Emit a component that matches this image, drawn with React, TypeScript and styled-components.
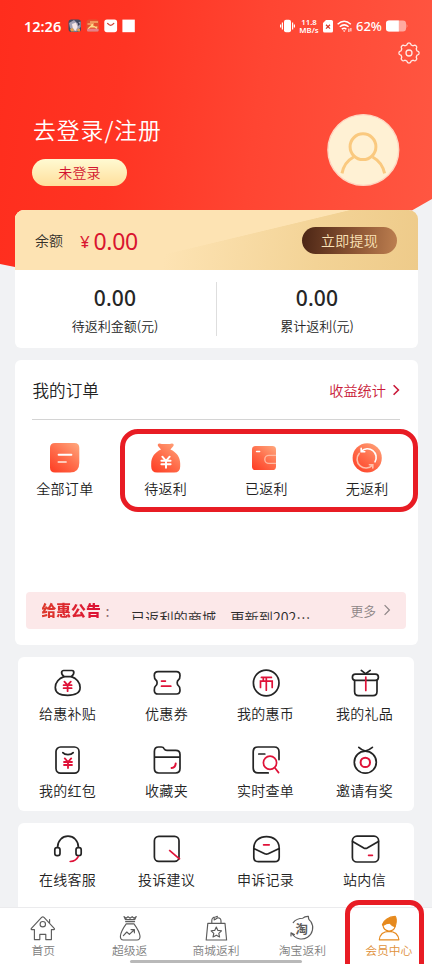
import React from "react";
import styled, { createGlobalStyle } from "styled-components";

const Global = createGlobalStyle`
  * { box-sizing: border-box; }
  html, body { margin: 0; padding: 0; background: #f1f2f4; }
  body { font-family: "Noto Sans CJK SC", sans-serif; font-weight: 350; color: #222; }
  svg { display: block; flex: none; overflow: visible; }
`;

const Screen = styled.div`
  position: relative;
  width: 432px;
  height: 964px;
  display: flex;
  flex-direction: column;
  overflow: hidden;
  background: #f1f2f4;
`;
const Scroll = styled.main`
  flex: 1;
  min-height: 0;
  overflow: hidden;
`;

/* ---------- header ---------- */
const Hero = styled.header`
  height: 276px;
  background: linear-gradient(97deg, #ff2d1d 0%, #ff3423 28%, #ff4532 58%, #ff5742 100%);
  clip-path: polygon(0 0, 432px 0, 432px 199px, 411px 211px, 300px 276px, 60px 276px, 0 264px);
`;
const StatusBar = styled.div`
  height: 41px;
  padding: 11px 24px 0 24px;
  display: flex;
  justify-content: space-between;
  color: #fff;
  font-family: "Noto Sans", sans-serif;
`;
const StatusGroup = styled.div<{ $gap: number }>`
  display: flex;
  align-items: center;
  height: 30px;
  gap: ${(p) => p.$gap}px;
`;
const Clock = styled.span`
  font-size: 14.5px;
  font-weight: 600;
  line-height: 30px;
  width: 38px;
  white-space: nowrap;
`;
const Speed = styled.span`
  display: flex;
  flex-direction: column;
  align-items: center;
  width: 20px;
`;
const SpeedLine = styled.span`
  height: 8px;
  font-size: 7.8px;
  line-height: 8px;
  font-weight: 600;
  white-space: nowrap;
`;
const Percent = styled.span`
  font-size: 13px;
  font-weight: 500;
  line-height: 30px;
  width: 26px;
  white-space: nowrap;
`;
const SettingsRow = styled.div`
  display: flex;
  justify-content: flex-end;
  padding-right: 11px;
  height: 73px;
`;
const Profile = styled.div`
  display: flex;
  justify-content: space-between;
  padding: 0 32px;
`;
const ProfileText = styled.div`
  display: flex;
  flex-direction: column;
  align-items: flex-start;
`;
const LoginTitle = styled.h1`
  margin: 0;
  height: 45px;
  padding-left: 1px;
  font-size: 22.8px;
  line-height: 32px;
  letter-spacing: 1px;
  font-weight: 350;
  color: #fff;
`;
const LoginPill = styled.button`
  width: 95px;
  height: 27px;
  padding: 0;
  border: 0;
  border-radius: 14px;
  background: linear-gradient(#fffad2, #ffdf9c);
  color: #d2142e;
  font: 350 14px/27px "Noto Sans CJK SC", sans-serif;
  letter-spacing: 0.2px;
`;

/* ---------- cards ---------- */
const Content = styled.div`
  position: relative;
  z-index: 1;
  margin-top: -66px;
  display: flex;
  flex-direction: column;
  align-items: center;
  gap: 12px;
`;
const Card = styled.section<{ $w: number; $h: number }>`
  width: ${(p) => p.$w}px;
  height: ${(p) => p.$h}px;
  flex: none;
  border-radius: 6px;
  background: #fff;
`;
const BalanceCard = styled(Card)`
  border-radius: 9px 9px 6px 6px;
  overflow: hidden;
`;
const Gold = styled.div`
  height: 60px;
  padding: 0 20.5px 0 20.5px;
  display: flex;
  align-items: center;
  background:
    linear-gradient(166.5deg, #fde3b3 51.1%, rgba(253, 227, 179, 0) 51.6%),
    linear-gradient(100deg, #fde3b3 38%, #f3d396 75%, #eecb8a 100%);
`;
const BalanceLabel = styled.span`
  font-size: 14px;
  width: 45px;
  color: #33302a;
`;
const Yen = styled.span`
  font: 400 17px/24px "Noto Sans", sans-serif;
  width: 13.5px;
  padding-top: 4px;
  color: #d9152f;
`;
const BalanceAmount = styled.span`
  flex: 1;
  padding-top: 2px;
  font: 400 23px/30px "Noto Sans", sans-serif;
  letter-spacing: -0.3px;
  color: #d9152f;
`;
const Withdraw = styled.button`
  width: 95px;
  height: 27px;
  padding: 0;
  border: 0;
  border-radius: 14px;
  background: linear-gradient(95deg, #4b2515, #8b5433 55%, #bd7f50);
  color: #fbe3b8;
  font: 350 14px/27px "Noto Sans CJK SC", sans-serif;
  letter-spacing: 0.2px;
`;
const Totals = styled.div`
  display: flex;
  align-items: center;
  height: 78px;
`;
const Total = styled.div`
  flex: 1;
  display: flex;
  flex-direction: column;
  align-items: center;
`;
const TotalValue = styled.strong`
  font: 500 21px/30px "Noto Sans", sans-serif;
  letter-spacing: 0.2px;
  color: #262626;
`;
const TotalName = styled.span`
  font-size: 13px;
  line-height: 20px;
  margin-top: 3px;
  white-space: nowrap;
`;
const Rule = styled.i`
  width: 1px;
  height: 54px;
  background: #dedede;
`;

const OrdersHead = styled.div`
  height: 60px;
  margin: 0 17.5px;
  display: flex;
  align-items: center;
  justify-content: space-between;
  border-bottom: 1px solid #d4d4d4;
`;
const OrdersTitle = styled.h2`
  margin: 0;
  padding-left: 0.5px;
  font-size: 16.6px;
  font-weight: 350;
  line-height: 24px;
`;
const StatsLink = styled.a`
  display: flex;
  align-items: center;
  gap: 6px;
  font-size: 14.2px;
  color: #c91938;
`;
const OrdersGrid = styled.div`
  height: 172px;
  padding-top: 23px;
  display: grid;
  grid-template-columns: repeat(4, 1fr);
  align-content: start;
`;
const Cell = styled.a<{ $gap: number }>`
  display: flex;
  flex-direction: column;
  align-items: center;
  gap: ${(p) => p.$gap}px;
`;
const CellName = styled.span`
  font-size: 14px;
  line-height: 20px;
  letter-spacing: 0.3px;
  white-space: nowrap;
`;
const Notice = styled.div`
  height: 36.5px;
  margin: 0 11.5px;
  padding: 0 15px 0 15.5px;
  display: flex;
  align-items: center;
  border-radius: 4px;
  background: #fce8e9;
`;
const NoticeBrand = styled.b`
  width: 60px;
  font-size: 14.8px;
  font-weight: 900;
  line-height: 24px;
  white-space: nowrap;
  background: linear-gradient(90deg, #dd3a2c, #dc0f35);
  background-clip: text;
  -webkit-background-clip: text;
  color: transparent;
`;
const Colon = styled.span`
  width: 29.5px;
  padding-left: 4px;
  font-size: 15px;
  color: #8b6a6c;
`;
const NoticeClip = styled.div`
  flex: 1;
  height: 11px;
  margin-top: 8px;
  overflow: hidden;
  font-size: 14.2px;
  line-height: 16px;
  white-space: nowrap;
  color: #2b2b2b;
`;
const More = styled.a`
  display: flex;
  align-items: center;
  gap: 7px;
  font-size: 12.8px;
  color: #8d8586;
`;
const ServiceGrid = styled.div<{ $top: number }>`
  padding-top: ${(p) => p.$top}px;
  display: grid;
  grid-template-columns: repeat(4, 99px);
  grid-auto-rows: 77px;
`;

/* ---------- bottom navigation ---------- */
const Nav = styled.nav`
  position: relative;
  height: 57px;
  flex: none;
  display: grid;
  grid-template-columns: repeat(5, 1fr);
  padding-top: 7px;
  background: #fff;
  border-top: 1px solid #ebebed;
`;
const Tab = styled.a<{ $active?: boolean }>`
  display: flex;
  flex-direction: column;
  align-items: center;
  color: ${(p) => (p.$active ? "#e68a1e" : "#5c5c5c")};
`;
const TabName = styled.span<{ $active?: boolean }>`
  font-size: 11.8px;
  line-height: 13px;
  white-space: nowrap;
  color: ${(p) => (p.$active ? "#e0913a" : "#808080")};
`;
const HomeIndicator = styled.i`
  position: absolute;
  left: 130px;
  bottom: 1px;
  width: 172px;
  height: 3px;
  border-radius: 2px;
  background: #b9b9b9;
`;
const Marker = styled.div<{ $x: number; $y: number; $w: number; $h: number; $r: number }>`
  position: absolute;
  z-index: 5;
  left: ${(p) => p.$x}px;
  top: ${(p) => p.$y}px;
  width: ${(p) => p.$w}px;
  height: ${(p) => p.$h}px;
  border: 5px solid #e81c24;
  border-radius: ${(p) => p.$r}px;
  pointer-events: none;
`;

/* ---------- icons ---------- */
const RED = "#df1238";

const YenMark = ({ x, y, s = 1, color = RED, w = 1.8 }: { x: number; y: number; s?: number; color?: string; w?: number }) => (
  <path
    transform={`translate(${x} ${y}) scale(${s})`}
    d="M-3.2 -4.6 L0 -1 L3.2 -4.6 M-4 -1 H4 M-4 2 H4 M0 -1 V5"
    stroke={color}
    strokeWidth={w}
    fill="none"
  />
);

const Line = ({ children, width = 1.7 }: { children: React.ReactNode; width?: number }) => (
  <svg width="28" height="28" viewBox="0 0 28 28" fill="none" stroke="#242424" strokeWidth={width} strokeLinecap="round" strokeLinejoin="round">
    {children}
  </svg>
);

const serviceIcons: Record<string, React.ReactNode> = {
  subsidy: (
    <Line>
      <path d="M10 7.6C8.2 6 7.2 4 7.8 2.5Q8.2 1.5 9.5 1.5H17.8Q19.2 1.5 19.7 2.5C20.2 4 19.2 6 17.4 7.6Z" />
      <path d="M10 7.6C5 9.4 1.3 13.6 1.3 18.4C1.3 23.8 6 26.3 13.7 26.3S26.1 23.8 26.1 18.4C26.1 13.6 22.4 9.4 17.4 7.6" />
      <YenMark x={13.6} y={17.2} />
    </Line>
  ),
  coupon: (
    <Line>
      <path d="M5 2.7H23.4C25.8 2.7 27 4 27 6.5C27 9.5 26.8 9.9 25.6 10.7C23.7 12 23.7 15.6 25.6 16.9C26.8 17.7 27 18.2 27 21.2C27 23.7 25.8 25 23.4 25H5C2.6 25 1.3 23.7 1.3 21.2C1.3 18.2 1.5 17.7 2.7 16.9C4.6 15.6 4.6 12 2.7 10.7C1.5 9.9 1.3 9.5 1.3 6.5C1.3 4 2.6 2.7 5 2.7Z" />
      <path d="M8.5 12.1H12.4M8.5 17.2H17.8" stroke={RED} />
    </Line>
  ),
  coin: (
    <Line>
      <circle cx="14.2" cy="14" r="12.8" />
      <path d="M9.4 8.4H19.4M14.3 8.6V21.2M8.5 18.4V12.1H20.2V18.4M11.3 8.6V12" stroke={RED} strokeLinejoin="miter" />
    </Line>
  ),
  gift: (
    <Line>
      <rect x="1.4" y="5.2" width="26" height="6.2" rx="3.1" />
      <path d="M3.6 11.6V22.6Q3.6 26.7 7.6 26.7H22Q26 26.7 26 22.6V11.6M10.3 1.4L14.7 4.8L19.2 1.4" />
      <path d="M14.8 8V21.4" stroke={RED} />
    </Line>
  ),
  packet: (
    <Line>
      <rect x="2" y="1" width="23" height="26.2" rx="4.6" />
      <path d="M8.8 6.6C11 9.2 17 9.2 19.2 6.6" />
      <YenMark x={14} y={17} />
    </Line>
  ),
  folder: (
    <Line>
      <path d="M1.4 22.6V5.4Q1.4 1 5.6 1H8.2Q10.4 1 11.2 2.8Q12 4.4 14 4.4H22.8Q27 4.4 27 8.6V22.6Q27 27 22.6 27H5.8Q1.4 27 1.4 22.6ZM1.4 11.1H27" />
      <path d="M22.7 17.6Q22.3 21.6 18.6 22" stroke={RED} strokeWidth="2" />
    </Line>
  ),
  search: (
    <Line>
      <path d="M27 13.6V5.8Q27 1 22.2 1H6Q1.2 1 1.2 5.8V22Q1.2 26.9 6 26.9H16.2M6.8 8H12.8" />
      <circle cx="18" cy="16.8" r="6.6" stroke={RED} />
      <path d="M22.8 21.8L26.6 26.6" stroke={RED} />
    </Line>
  ),
  invite: (
    <Line>
      <circle cx="14.3" cy="16.2" r="11" />
      <path d="M7.8 1.3Q11 4.2 14.3 5Q17.8 4.2 21.4 1.3" />
      <circle cx="14.3" cy="16.4" r="4.7" stroke={RED} strokeWidth="2" />
    </Line>
  ),
  headset: (
    <Line>
      <path d="M3.6 12.2C3.8 5.6 8.2 1.2 14 1.2S24.2 5.6 24.4 12.2" />
      <rect x="0.8" y="12.6" width="5.2" height="8" rx="2.2" />
      <rect x="22" y="12.6" width="5.2" height="8" rx="2.2" />
      <path d="M24.2 21.6Q22 26.2 16.2 26.5" stroke={RED} />
    </Line>
  ),
  complaint: (
    <Line>
      <rect x="1.4" y="1.4" width="24.6" height="25" rx="4.4" />
      <path d="M16.2 15.2L27 24.4" stroke={RED} strokeLinecap="butt" />
    </Line>
  ),
  appeal: (
    <Line>
      <path d="M1.8 13.2C1.8 6 7.4 1.6 14.5 1.6S27.2 6 27.2 13.2V22.2Q27.2 26.7 22.6 26.7H6.4Q1.8 26.7 1.8 22.2ZM1.8 13.4L12.8 18.8Q14.5 19.6 16.2 18.8L27.2 13.4" />
      <path d="M11.6 9.8H17.2" stroke={RED} />
    </Line>
  ),
  mail: (
    <Line>
      <rect x="1.4" y="1.2" width="26.2" height="25.8" rx="4.6" />
      <path d="M1.6 6.4L12.8 12.9Q14.5 13.8 16.2 12.9L27.4 6.4" />
      <path d="M17.6 20.3H21.4" stroke={RED} />
    </Line>
  ),
};

const OrderIcon = ({ kind }: { kind: string }) => (
  <svg width="30" height="30" viewBox="0 0 30 30" fill="none" strokeLinecap="round">
    <defs>
      <linearGradient id={`warm-${kind}`} x1="0.1" y1="1" x2="0.9" y2="0">
        <stop offset="0" stopColor="#fe3f25" />
        <stop offset="0.5" stopColor="#ff6d4b" />
        <stop offset="1" stopColor="#ffa47a" />
      </linearGradient>
    </defs>
    {kind === "all" && (
      <>
        <path d="M5 0H24.5Q29.3 0 29.3 5V20Q29.3 29.6 20 29.6H5Q0 29.6 0 24.6V5Q0 0 5 0Z" fill={`url(#warm-${kind})`} />
        <path d="M8.6 11.8H21.4" stroke="#fff" strokeWidth="2" />
        <path d="M8.4 19H16" stroke="#ffc9b8" strokeWidth="1.8" />
      </>
    )}
    {kind === "pending" && (
      <>
        <path d="M7.4 0.7Q9 0.2 10.8 1.1H18.8Q20.6 0.2 22 0.7Q23.4 1.6 22.4 3L19.4 6.4C25.5 9 29.2 14 29.2 20.4V23.6Q29.2 29.6 23.2 29.6H6.2Q0.2 29.6 0.2 23.6V20.4C0.2 14 4 9 10 6.4L7 3Q6.2 1.6 7.4 0.7Z" fill={`url(#warm-${kind})`} />
        <YenMark x={15} y={19} s={1.15} color="#fff" w={1.7} />
      </>
    )}
    {kind === "paid" && (
      <>
        <rect x="1" y="3" width="24" height="24" rx="3.6" fill={`url(#warm-${kind})`} />
        <path d="M5.6 8.5H8.6" stroke="#fff" strokeWidth="1.6" />
        <path d="M25 12.4H17.8A4 4 0 0 0 17.8 20.4H25" stroke="#ffb9a1" strokeWidth="1.4" strokeLinecap="butt" />
      </>
    )}
    {kind === "none" && (
      <>
        <circle cx="15.2" cy="14.9" r="14.6" fill={`url(#warm-${kind})`} />
        <path d="M9.4 8.2A8.7 8.7 0 0 1 23 18.8M9.2 5.2V8.8H12.8" stroke="#fff" strokeWidth="1.6" />
        <path d="M7.2 10.4A8.7 8.7 0 0 0 20.6 21.9M17.4 21.7H20.8V25" stroke="#ffc0aa" strokeWidth="1.6" />
      </>
    )}
  </svg>
);

const navIcons: Record<string, React.ReactNode> = {
  home: (
    <>
      <path d="M5.4 14.6H2.6Q1.6 14.4 2.4 13.4L12.6 2.4Q13.8 1.4 15 2.4L25.2 13.4Q26 14.4 25 14.6H22.4V24.6H16.8V19.4H10.8V24.6H5.4ZM20.6 7.6V4.6" />
      <circle cx="13.8" cy="9.2" r="2.7" />
    </>
  ),
  bag: (
    <>
      <path d="M8 1.6L9.4 4.6H18.8L20.2 1.6L18 3.2L16.2 1.6L14.1 3.2L12 1.6L10.2 3.2ZM9.6 6.6H18.6M10.2 8.8H18C20.6 12.4 23.6 16.6 24 21Q24.2 25 21 25H7.4Q4.2 25 4.4 21C4.8 16.6 7.6 12.4 10.2 8.8Z" />
      <path d="M7.4 20.6L10.8 17L13.4 19.4L18 15M15 14.6H18.4V17.8" />
    </>
  ),
  shop: (
    <>
      <path d="M5.8 8.4H23L24.6 25H4.2ZM9.8 8V5.6Q9.8 2.2 13.4 2L15.4 1.4M13.2 4.4L15.6 2.8Q19 3 19 6V8M12.2 5V2.2" />
      <path d="M14.3 12L15.9 15.4L19.5 15.8L16.8 18.3L17.6 22L14.3 20.2L11 22L11.8 18.3L9.1 15.8L12.7 15.4Z" />
    </>
  ),
  tao: (
    <>
      <path d="M4 18.8A11.2 11.2 0 1 0 22.9 6.6Q20 4.6 20.4 1.4Q16.8 1.2 14.8 3.2Q8.6 3.2 5.2 7.6M3 21V17.8L6.4 19.4" />
      <text x="13.8" y="18.6" fontSize="12.4" fontWeight="700" textAnchor="middle" fill="currentColor" stroke="none" fontFamily="Noto Sans CJK SC, sans-serif">
        淘
      </text>
    </>
  ),
  member: (
    <>
      <path d="M7.4 9.6C8.4 5.6 13.4 1.8 20.2 1.4Q22 4 20.8 9.4L20 11.8Q17.4 11.4 14.8 8.2Q11.6 8 8.4 10.2Q7.4 10.4 7.4 9.6Z" fill="currentColor" />
      <path d="M8 10.4A6.2 6.2 0 0 0 20.2 11.2M4.3 24.8Q5.2 16.6 14.1 16.4Q22.8 16.6 23.9 24.8Z" />
    </>
  ),
};

const NavIcon = ({ kind }: { kind: string }) => (
  <svg width="28" height="28" viewBox="0 0 28 28" fill="none" stroke="currentColor" strokeWidth="1.15" strokeLinejoin="round" strokeLinecap="round">
    {navIcons[kind]}
  </svg>
);

const Chevron = ({ w = 1.6 }: { w?: number }) => (
  <svg width="8" height="12" viewBox="0 0 8 12" fill="none" stroke="currentColor" strokeWidth={w}>
    <path d="M1.6 1.2L6.4 6L1.6 10.8" />
  </svg>
);

const gearPath =
  Array.from({ length: 96 }, (_, i) => {
    const a = (i / 96) * Math.PI * 2;
    const r = 9.1 + 0.95 * Math.tanh(2 * Math.cos(8 * a));
    return `${i ? "L" : "M"}${(12 + r * Math.cos(a)).toFixed(2)} ${(12 + r * Math.sin(a)).toFixed(2)}`;
  }).join("") + "Z";

const Gear = () => (
  <svg width="24" height="24" viewBox="0 0 24 24" fill="none" stroke="#ffe9e4" strokeWidth="1.3" strokeLinejoin="round">
    <path d={gearPath} />
    <circle cx="12" cy="12" r="3" />
  </svg>
);

const Avatar = () => (
  <svg width="73" height="73" viewBox="0 0 73 73" fill="none" stroke="#fac97f">
    <circle cx="36.3" cy="36" r="35.4" fill="#fff1d4" stroke="#ffd5c0" strokeWidth="1.4" />
    <circle cx="36" cy="32.7" r="12.9" strokeWidth="3" />
    <path d="M15 59.4C16.4 52 20.4 46.4 26.6 43M57.6 59.4C56 52 51.8 46.4 45.6 43" strokeWidth="3" />
  </svg>
);

const AppBadges = () => (
  <svg width="67" height="14" viewBox="0 0 67 14">
    <rect x="0.5" y="0.5" width="12.5" height="12.5" rx="3" fill="#43485f" />
    <path d="M1 4L6 1L9 4L12.6 2.4V8L9 12.6H6L2 9Z" fill="#a4a0b4" />
    <path d="M4 5L8 3.6L9.6 8L7.4 12L4.8 9Z" fill="#f6e6e6" />
    <path d="M2 10L5 9L6 12.6H3ZM9.4 9.8H12V12.6H9.4Z" fill="#e4a04a" />
    <path d="M9 2L12 5L10.5 7Z" fill="#33384e" />
    <rect x="18.5" y="0.5" width="12.5" height="12.5" rx="3" fill="#e5502f" />
    <path d="M19.5 5H25L23 8H29.5M22 3H30M20 10L24 6L29 9.6" stroke="#ffdc8a" strokeWidth="1.2" fill="none" />
    <rect x="19" y="9.8" width="11.6" height="2.8" rx="1" fill="#e8808a" />
    <rect x="36.3" y="0.4" width="12.8" height="12.8" rx="2.6" fill="#fff" />
    <path d="M39.6 4.4Q42.7 8.2 45.8 4.4" stroke="#cf4436" strokeWidth="1.3" fill="none" strokeLinecap="round" />
    <rect x="54.4" y="0.6" width="12.4" height="12.6" fill="#fff" />
  </svg>
);

const Vibrate = () => (
  <svg width="15" height="14" viewBox="0 0 15 14" fill="#fff">
    <rect x="4" y="0.8" width="7" height="12.4" rx="2" />
    <path d="M2.4 3.6V10.4M12.6 3.6V10.4M0.6 5.4V8.6M14.4 5.4V8.6" stroke="#fff" strokeWidth="1.2" />
  </svg>
);
const Sim = () => (
  <svg width="10" height="13" viewBox="0 0 10 13">
    <path d="M3 0H8.4Q10 0 10 1.6V11Q10 12.6 8.4 12.6H1.6Q0 12.6 0 11V3Z" fill="#fff" />
    <path d="M3 4.8L7 8.6M7 4.8L3 8.6" stroke="#d8392b" strokeWidth="1.3" />
  </svg>
);
const Wifi = () => (
  <svg width="15" height="13" viewBox="0 0 15 13" fill="none" stroke="#fff" strokeWidth="1.5">
    <path d="M0.6 4.2Q7.2 -1.6 13.8 4.2M2.8 6.8Q7.2 3 11.6 6.8M4.8 9.2Q7.2 7.2 9.4 9.2" />
    <path d="M5.8 10.4H8.6L7.2 12Z" fill="#fff" stroke="none" />
    <path d="M11.9 8.6V12M13.9 8V11.4" strokeWidth="1" />
  </svg>
);
const Battery = () => (
  <svg width="22" height="12" viewBox="0 0 22 12">
    <rect x="0" y="0.6" width="20" height="10.8" rx="3" fill="#ffaaa0" />
    <path d="M20.6 3.4Q22.4 6 20.6 8.6Z" fill="#ffaaa0" />
    <path d="M3 0.6H12.8V11.4H3Q0 11.4 0 8.4V3.6Q0 0.6 3 0.6Z" fill="#fff" />
  </svg>
);

/* ---------- data ---------- */
const orders = [
  ["all", "全部订单"],
  ["pending", "待返利"],
  ["paid", "已返利"],
  ["none", "无返利"],
];
const services = [
  ["subsidy", "给惠补贴"],
  ["coupon", "优惠券"],
  ["coin", "我的惠币"],
  ["gift", "我的礼品"],
  ["packet", "我的红包"],
  ["folder", "收藏夹"],
  ["search", "实时查单"],
  ["invite", "邀请有奖"],
];
const support = [
  ["headset", "在线客服"],
  ["complaint", "投诉建议"],
  ["appeal", "申诉记录"],
  ["mail", "站内信"],
];
const tabs = [
  ["home", "首页"],
  ["bag", "超级返"],
  ["shop", "商城返利"],
  ["tao", "淘宝返利"],
  ["member", "会员中心"],
];

const Services = ({ items, top }: { items: string[][]; top: number }) => (
  <ServiceGrid $top={top}>
    {items.map(([icon, name]) => (
      <Cell key={icon} $gap={6}>
        {serviceIcons[icon]}
        <CellName>{name}</CellName>
      </Cell>
    ))}
  </ServiceGrid>
);

export default function App() {
  return (
    <Screen lang="zh-CN">
      <Global />
      <Scroll>
        <Hero>
          <StatusBar>
            <StatusGroup $gap={6}>
              <Clock>12:26</Clock>
              <AppBadges />
            </StatusGroup>
            <StatusGroup $gap={4}>
              <Vibrate />
              <Speed>
                <SpeedLine>11.8</SpeedLine>
                <SpeedLine>MB/s</SpeedLine>
              </Speed>
              <Sim />
              <Wifi />
              <Percent>62%</Percent>
              <Battery />
            </StatusGroup>
          </StatusBar>
          <SettingsRow>
            <Gear />
          </SettingsRow>
          <Profile>
            <ProfileText>
              <LoginTitle>去登录/注册</LoginTitle>
              <LoginPill>未登录</LoginPill>
            </ProfileText>
            <Avatar />
          </Profile>
        </Hero>

        <Content>
          <BalanceCard $w={403} $h={138}>
            <Gold>
              <BalanceLabel>余额</BalanceLabel>
              <Yen>¥</Yen>
              <BalanceAmount>0.00</BalanceAmount>
              <Withdraw>立即提现</Withdraw>
            </Gold>
            <Totals>
              <Total>
                <TotalValue>0.00</TotalValue>
                <TotalName>待返利金额(元)</TotalName>
              </Total>
              <Rule />
              <Total>
                <TotalValue>0.00</TotalValue>
                <TotalName>累计返利(元)</TotalName>
              </Total>
            </Totals>
          </BalanceCard>

          <Card $w={403} $h={285}>
            <OrdersHead>
              <OrdersTitle>我的订单</OrdersTitle>
              <StatsLink>
                收益统计
                <Chevron />
              </StatsLink>
            </OrdersHead>
            <OrdersGrid>
              {orders.map(([icon, name]) => (
                <Cell key={icon} $gap={5}>
                  <OrderIcon kind={icon} />
                  <CellName>{name}</CellName>
                </Cell>
              ))}
            </OrdersGrid>
            <Notice>
              <NoticeBrand>给惠公告</NoticeBrand>
              <Colon>:</Colon>
              <NoticeClip>已返利的商城，更新到202…</NoticeClip>
              <More>
                更多
                <Chevron w={1.2} />
              </More>
            </Notice>
          </Card>

          <Card $w={396} $h={154}>
            <Services items={services} top={12} />
          </Card>

          <Card $w={396} $h={154}>
            <Services items={support} top={12} />
          </Card>
        </Content>
      </Scroll>

      <Nav>
        {tabs.map(([icon, name]) => (
          <Tab key={icon} $active={icon === "member"}>
            <NavIcon kind={icon} />
            <TabName $active={icon === "member"}>{name}</TabName>
          </Tab>
        ))}
        <HomeIndicator />
      </Nav>

      <Marker $x={120} $y={429} $w={298} $h={83} $r={18} />
      <Marker $x={345} $y={900} $w={79} $h={90} $r={14} />
    </Screen>
  );
}
